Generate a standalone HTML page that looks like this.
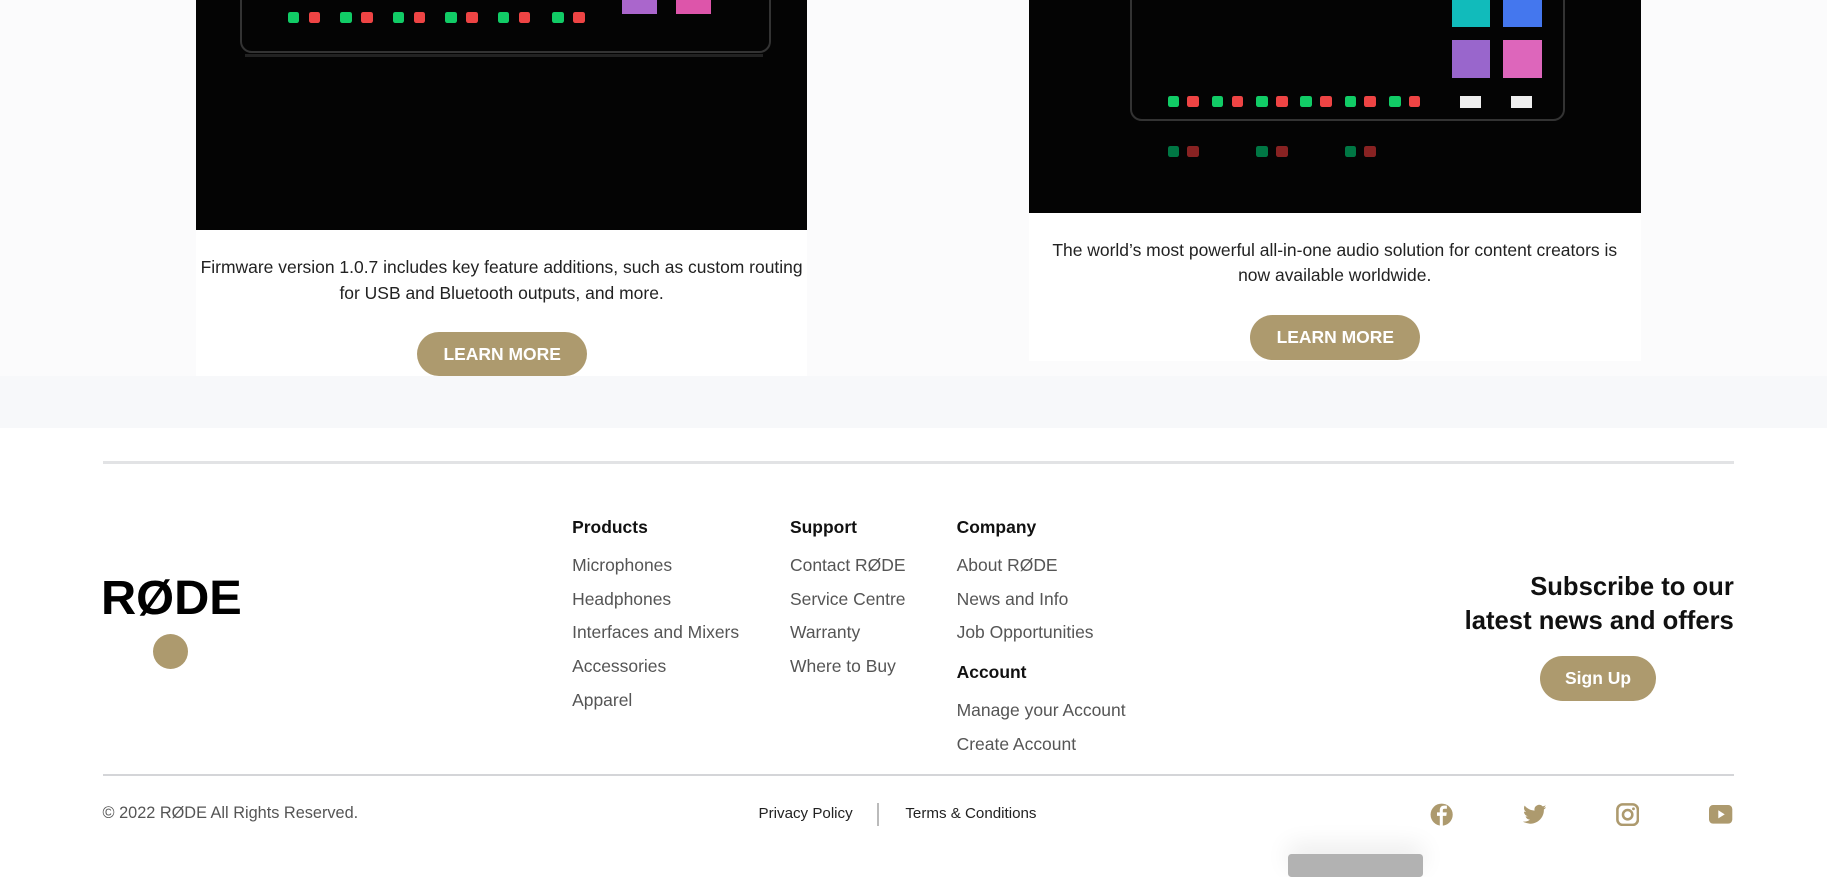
<!DOCTYPE html>
<html><head><meta charset="utf-8">
<style>
html{zoom:1.16518}
body{margin:0;width:1568px;height:748px;overflow:hidden;position:relative;background:#fff;font-family:"Liberation Sans",sans-serif}
.abs{position:absolute}
.top{left:0;top:0;width:1568px;height:323px;background:#fbfbfc}
.band{left:0;top:323px;width:1568px;height:44px;background:#f7f8fa}
.card{background:#fff}
.img{background:#040404;overflow:hidden}
.txt{font-size:15px;color:#222;text-align:center;line-height:22px}
.btn{background:#ad9a6e;color:#fff;font-weight:bold;font-size:15px;border-radius:20px;text-align:center}
.h{font-weight:bold;font-size:15px;color:#111}
.l{font-size:15px;color:#555}
.k{width:10px;height:10px;border-radius:2px}
</style></head><body>
<div class="abs top"></div>
<div class="abs band"></div>
<div class="abs card" style="left:168px;top:0;width:525px;height:323px"></div>
<div class="abs card" style="left:883px;top:0;width:525px;height:310px"></div>
<div class="abs img" style="left:168px;top:0;width:525px;height:197px">
 <div class="abs" style="left:38px;top:-20px;width:452px;height:62px;border:2px solid #333;border-radius:10px"></div>
 <div class="abs" style="left:42px;top:46px;width:445px;height:3px;background:#222"></div>
 <div class="abs k" style="left:79px;top:10px;background:#1c6"></div><div class="abs k" style="left:97px;top:10px;background:#e44"></div>
 <div class="abs k" style="left:124px;top:10px;background:#1c6"></div><div class="abs k" style="left:142px;top:10px;background:#e44"></div>
 <div class="abs k" style="left:169px;top:10px;background:#1c6"></div><div class="abs k" style="left:187px;top:10px;background:#e44"></div>
 <div class="abs k" style="left:214px;top:10px;background:#1c6"></div><div class="abs k" style="left:232px;top:10px;background:#e44"></div>
 <div class="abs k" style="left:259px;top:10px;background:#1c6"></div><div class="abs k" style="left:277px;top:10px;background:#e44"></div>
 <div class="abs k" style="left:306px;top:10px;background:#1c6"></div><div class="abs k" style="left:324px;top:10px;background:#e44"></div>
 <div class="abs" style="left:366px;top:0;width:30px;height:12px;background:#a6c"></div><div class="abs" style="left:412px;top:0;width:30px;height:12px;background:#d5a"></div>
</div>
<div class="abs img" style="left:883px;top:0;width:525px;height:183px">
 <div class="abs" style="left:87px;top:-20px;width:370px;height:120px;border:2px solid #333;border-radius:10px"></div>
 <div class="abs" style="left:363px;top:0;width:33px;height:23px;background:#1bb"></div><div class="abs" style="left:407px;top:0;width:33px;height:23px;background:#47e"></div>
 <div class="abs" style="left:363px;top:34px;width:33px;height:33px;background:#96c"></div><div class="abs" style="left:407px;top:34px;width:33px;height:33px;background:#d6b"></div>
 <div class="abs" style="left:370px;top:82px;width:18px;height:11px;background:#eee"></div><div class="abs" style="left:414px;top:82px;width:18px;height:11px;background:#eee"></div>
 <div class="abs k" style="left:119px;top:82px;background:#1c6"></div><div class="abs k" style="left:136px;top:82px;background:#e44"></div>
 <div class="abs k" style="left:157px;top:82px;background:#1c6"></div><div class="abs k" style="left:174px;top:82px;background:#e44"></div>
 <div class="abs k" style="left:195px;top:82px;background:#1c6"></div><div class="abs k" style="left:212px;top:82px;background:#e44"></div>
 <div class="abs k" style="left:233px;top:82px;background:#1c6"></div><div class="abs k" style="left:250px;top:82px;background:#e44"></div>
 <div class="abs k" style="left:271px;top:82px;background:#1c6"></div><div class="abs k" style="left:288px;top:82px;background:#e44"></div>
 <div class="abs k" style="left:309px;top:82px;background:#1c6"></div><div class="abs k" style="left:326px;top:82px;background:#e44"></div>
 <div class="abs k" style="left:119px;top:125px;background:#074"></div><div class="abs k" style="left:136px;top:125px;background:#822"></div>
 <div class="abs k" style="left:195px;top:125px;background:#074"></div><div class="abs k" style="left:212px;top:125px;background:#822"></div>
 <div class="abs k" style="left:271px;top:125px;background:#074"></div><div class="abs k" style="left:288px;top:125px;background:#822"></div>
</div>
<div class="abs txt" style="left:168px;top:219px;width:525px">Firmware version 1.0.7 includes key feature additions, such as custom routing<br>for USB and Bluetooth outputs, and more.</div>
<div class="abs btn" style="left:358px;top:285px;width:146px;height:38px;line-height:38px">LEARN MORE</div>
<div class="abs txt" style="left:883px;top:204px;width:525px">The world’s most powerful all-in-one audio solution for content creators is<br>now available worldwide.</div>
<div class="abs btn" style="left:1073px;top:270px;width:146px;height:39px;line-height:39px">LEARN MORE</div>

<div class="abs" style="left:88px;top:396px;width:1400px;height:2px;background:#e2e3e5"></div>
<div class="abs" style="left:87px;top:492px;font-size:41px;font-weight:bold;letter-spacing:0;color:#000;line-height:44px;transform:scaleX(1.02);transform-origin:left">RØDE</div>
<div class="abs" style="left:131px;top:544px;width:30px;height:30px;border-radius:50%;background:#ad9a6e"></div>

<div class="abs h" style="left:491px;top:444px">Products</div>
<div class="abs l" style="left:491px;top:471px;line-height:29px">Microphones<br>Headphones<br>Interfaces and Mixers<br>Accessories<br>Apparel</div>
<div class="abs h" style="left:678px;top:444px">Support</div>
<div class="abs l" style="left:678px;top:471px;line-height:29px">Contact RØDE<br>Service Centre<br>Warranty<br>Where to Buy</div>
<div class="abs h" style="left:821px;top:444px">Company</div>
<div class="abs l" style="left:821px;top:471px;line-height:29px">About RØDE<br>News and Info<br>Job Opportunities</div>
<div class="abs h" style="left:821px;top:568px">Account</div>
<div class="abs l" style="left:821px;top:596px;line-height:29px">Manage your Account<br>Create Account</div>

<div class="abs" style="right:80px;top:490px;text-align:right;font-size:22px;font-weight:bold;color:#111;line-height:29px">Subscribe to our<br>latest news and offers</div>
<div class="abs btn" style="left:1322px;top:563px;width:99px;height:39px;line-height:39px">Sign Up</div>

<div class="abs" style="left:88px;top:664px;width:1400px;height:2px;background:#d4d5d8"></div>
<div class="abs" style="left:88px;top:690px;font-size:14px;color:#555">© 2022 RØDE All Rights Reserved.</div>
<div class="abs" style="left:651px;top:691px;font-size:13px;color:#222">Privacy Policy</div>
<div class="abs" style="left:753px;top:689px;width:1px;height:20px;background:#bbb"></div>
<div class="abs" style="left:777px;top:691px;font-size:13px;color:#222">Terms &amp; Conditions</div>

<svg class="abs" style="left:1227px;top:689px" width="20" height="20" viewBox="0 0 20 20"><circle cx="10" cy="10" r="9.5" fill="#ad9a6e"/><path d="M11 20V11h3l.4-3H11V6.3c0-.9.3-1.4 1.5-1.4H14.5V2.3c-.4 0-1.3-.1-2.3-.1-2.3 0-3.8 1.4-3.8 3.9V8H6v3h2.4v9z" fill="#fff"/></svg>
<svg class="abs" style="left:1307px;top:690px" width="20" height="18" viewBox="0 0 24 20"><path d="M24 2.4c-.9.4-1.8.7-2.8.8 1-.6 1.8-1.6 2.2-2.7-1 .6-2 1-3.1 1.2A4.9 4.9 0 0 0 11.9 6C7.8 5.8 4.2 3.9 1.7.9.4 3.2 1.1 6 3.2 7.5c-.8 0-1.6-.2-2.200-.6 0 2.4 1.7 4.400 3.9 4.9-.7.2-1.5.2-2.2.1.6 2 2.4 3.4 4.6 3.4A9.9 9.9 0 0 1 0 17.3 14 14 0 0 0 21.5 4.9c1-.7 1.8-1.5 2.5-2.5z" fill="#ad9a6e"/></svg>
<svg class="abs" style="left:1387px;top:689px" width="20" height="20" viewBox="0 0 20 20"><rect x="1.2" y="1.2" width="17.6" height="17.6" rx="4.5" fill="none" stroke="#ad9a6e" stroke-width="2.2"/><circle cx="10" cy="10" r="4" fill="none" stroke="#ad9a6e" stroke-width="2.2"/><circle cx="15" cy="5" r="1.2" fill="#ad9a6e"/></svg>
<svg class="abs" style="left:1467px;top:691px" width="20" height="16" viewBox="0 0 20 16"><rect x="0" y="0" width="20" height="16" rx="3.5" fill="#ad9a6e"/><path d="M8 4.5v7l5.5-3.5z" fill="#fff"/></svg>

<div class="abs" style="left:1105px;top:733px;width:116px;height:20px;background:#b2b2b2;border-radius:3px;box-shadow:0 -8px 20px rgba(0,0,0,.08)"></div>
</body></html>
